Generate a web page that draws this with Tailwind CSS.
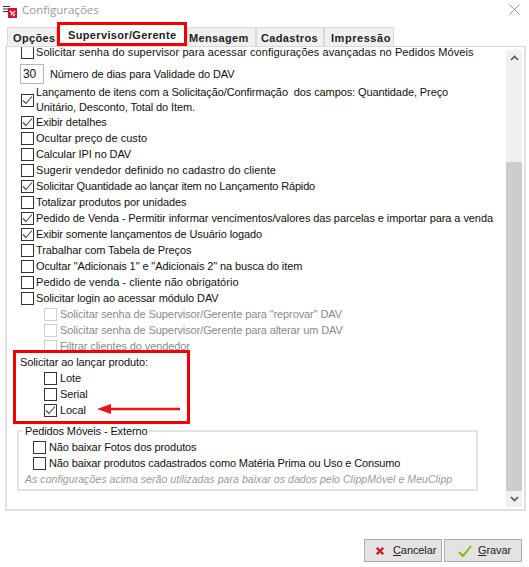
<!DOCTYPE html>
<html lang="pt-BR">
<head>
<meta charset="UTF-8">
<title>Configurações</title>
<script src="https://cdn.jsdelivr.net/npm/@tailwindcss/browser@4"></script>
</head>
<body class="bg-white w-[529px] h-[567px] overflow-hidden relative font-['Liberation_Sans',sans-serif] text-[11px] text-[#111]">

<!-- title bar -->
<div class="h-[27px] flex items-start relative">
  <svg class="absolute left-[2px] top-[5px]" width="16" height="13" viewBox="0 0 16 13"><path d="M1 1.500h7M1 4h6M1 6.500h5" stroke="#333" stroke-width="1" fill="none"/><rect x="6" y="3" width="9" height="10" fill="#d3142c"/><path d="M8 6l2 2M9 10l4-4M11 11l2-2" stroke="#fff" stroke-width="1.200" fill="none"/></svg>
  <span class="ml-[22px] mt-[1px] text-[11.5px] leading-[17px] text-[#999] font-['Open_Sans',sans-serif]">Configurações</span>
  <svg class="absolute left-[509px] top-[4px]" width="11" height="11" viewBox="0 0 11 11"><path d="M0.500 0.500l10 10M10.500 0.500l-10 10" stroke="#777" stroke-width="0.800" fill="none"/></svg>
</div>

<!-- tabs -->
<div class="h-[19px] flex ml-[7px] font-bold tracking-[0.35px] text-[#222]">
  <div class="w-[50px] bg-[#f0f0f0] border border-[#d9d9d9] border-b-0 pl-[5px] leading-[20px]">Opções</div>
  <div class="w-[130px] pl-[11px] leading-[16px]">Supervisor/Gerente</div>
  <div class="w-[69px] bg-[#f0f0f0] border border-[#d9d9d9] border-b-0 pl-[1px] leading-[20px]">Mensagem</div>
  <div class="w-[68px] bg-[#f0f0f0] border border-[#d9d9d9] border-b-0 pl-[4px] leading-[20px]">Cadastros</div>
  <div class="w-[70px] bg-[#f0f0f0] border border-[#d9d9d9] border-b-0 pl-[6px] tracking-[0.55px] leading-[20px]">Impressão</div>
</div>

<!-- panel -->
<div class="ml-[5px] w-[521px] h-[465px] border-2 border-t border-[#e0e0e0] border-t-[#d9d9d9] flex overflow-hidden">
  <div class="w-[499px] overflow-hidden pl-[14px]">
    <div class="tracking-[-0.1px] -mt-[1px]">
      <div class="flex h-[14px] items-start gap-[2px]"><span class="w-[13px] h-[13px] border border-[#333] shrink-0"></span><span class="leading-[12px] whitespace-nowrap tracking-[0.07px]">Solicitar senha do supervisor para acessar configurações avançadas no Pedidos Móveis</span></div>

      <div class="flex items-center h-[20px] mt-[4px] -ml-[1px]">
        <div class="w-[24px] h-[20px] border border-[#b5b5b5] pl-[2px] leading-[18px] text-[12px]">30</div>
        <span class="ml-[6px]">Número de dias para Validade do DAV</span>
      </div>

      <div class="flex gap-[2px] mt-[1px] h-[29px]">
        <span class="w-[13px] h-[13px] border border-[#333] mt-[9px] shrink-0 flex items-center justify-center"><svg width="11" height="11" viewBox="0 0 11 11"><path d="M1 5.500l3 3 6-7" stroke="#444" stroke-width="1.100" fill="none"/></svg></span>
        <span class="leading-[15px] w-[445px]">Lançamento de itens com a Solicitação/Confirmação&nbsp; dos campos: Quantidade, Preço Unitário, Desconto, Total do Item.</span>
      </div>

      <div class="flex items-center gap-[2px] h-[16px]"><span class="w-[13px] h-[13px] border border-[#333] shrink-0 flex items-center justify-center"><svg width="11" height="11" viewBox="0 0 11 11"><path d="M1 5.500l3 3 6-7" stroke="#444" stroke-width="1.100" fill="none"/></svg></span>Exibir detalhes</div>
      <div class="flex items-center gap-[2px] h-[16px] tracking-[0.02px]"><span class="w-[13px] h-[13px] border border-[#333] shrink-0"></span>Ocultar preço de custo</div>
      <div class="flex items-center gap-[2px] h-[16px]"><span class="w-[13px] h-[13px] border border-[#333] shrink-0"></span>Calcular IPI no DAV</div>
      <div class="flex items-center gap-[2px] h-[16px] tracking-[0.07px]"><span class="w-[13px] h-[13px] border border-[#333] shrink-0"></span>Sugerir vendedor definido no cadastro do cliente</div>
      <div class="flex items-center gap-[2px] h-[16px] tracking-[-0.16px]"><span class="w-[13px] h-[13px] border border-[#333] shrink-0 flex items-center justify-center"><svg width="11" height="11" viewBox="0 0 11 11"><path d="M1 5.500l3 3 6-7" stroke="#444" stroke-width="1.100" fill="none"/></svg></span>Solicitar Quantidade ao lançar item no Lançamento Rápido</div>
      <div class="flex items-center gap-[2px] h-[16px]"><span class="w-[13px] h-[13px] border border-[#333] shrink-0"></span>Totalizar produtos por unidades</div>
      <div class="flex items-center gap-[2px] h-[16px] whitespace-nowrap tracking-[-0.07px]"><span class="w-[13px] h-[13px] border border-[#333] shrink-0 flex items-center justify-center"><svg width="11" height="11" viewBox="0 0 11 11"><path d="M1 5.500l3 3 6-7" stroke="#444" stroke-width="1.100" fill="none"/></svg></span>Pedido de Venda - Permitir informar vencimentos/valores das parcelas e importar para a venda</div>
      <div class="flex items-center gap-[2px] h-[16px]"><span class="w-[13px] h-[13px] border border-[#333] shrink-0 flex items-center justify-center"><svg width="11" height="11" viewBox="0 0 11 11"><path d="M1 5.500l3 3 6-7" stroke="#444" stroke-width="1.100" fill="none"/></svg></span>Exibir somente lançamentos de Usuário logado</div>
      <div class="flex items-center gap-[2px] h-[16px]"><span class="w-[13px] h-[13px] border border-[#333] shrink-0"></span>Trabalhar com Tabela de Preços</div>
      <div class="flex items-center gap-[2px] h-[16px]"><span class="w-[13px] h-[13px] border border-[#333] shrink-0"></span>Ocultar "Adicionais 1" e "Adicionais 2" na busca do item</div>
      <div class="flex items-center gap-[2px] h-[16px] tracking-[0.05px]"><span class="w-[13px] h-[13px] border border-[#333] shrink-0"></span>Pedido de venda - cliente não obrigatório</div>
      <div class="flex items-center gap-[2px] h-[16px]"><span class="w-[13px] h-[13px] border border-[#333] shrink-0"></span>Solicitar login ao acessar módulo DAV</div>

      <div class="pl-[23px] text-[#8a8a8a]">
        <div class="flex items-center gap-[3px] h-[16px]"><span class="w-[13px] h-[13px] border border-[#d0d0d0] shrink-0"></span>Solicitar senha de Supervisor/Gerente para "reprovar" DAV</div>
        <div class="flex items-center gap-[3px] h-[16px]"><span class="w-[13px] h-[13px] border border-[#d0d0d0] shrink-0"></span>Solicitar senha de Supervisor/Gerente para alterar um DAV</div>
        <div class="flex items-center gap-[3px] h-[16px]"><span class="w-[13px] h-[13px] border border-[#d0d0d0] shrink-0"></span>Filtrar clientes do vendedor</div>
      </div>

      <div class="h-[16px] leading-[16px] -ml-[1px]">Solicitar ao lançar produto:</div>
      <div class="pl-[23px]">
        <div class="flex items-center gap-[3px] h-[16px]"><span class="w-[13px] h-[13px] border border-[#333] shrink-0"></span>Lote</div>
        <div class="flex items-center gap-[3px] h-[16px]"><span class="w-[13px] h-[13px] border border-[#333] shrink-0"></span>Serial</div>
        <div class="flex items-center gap-[3px] h-[16px]"><span class="w-[13px] h-[13px] border border-[#333] shrink-0 flex items-center justify-center"><svg width="11" height="11" viewBox="0 0 11 11"><path d="M1 5.500l3 3 6-7" stroke="#444" stroke-width="1.100" fill="none"/></svg></span>Local</div>
      </div>

      <!-- group box -->
      <div class="relative -ml-[4px] mt-[12px] w-[461px] h-[61px] border-2 border-[#e3e3e3] pl-[14px] pt-[7px]">
        <span class="absolute left-[4px] -top-[8px] bg-white px-[2px] leading-[14px] tracking-[-0.12px]">Pedidos Móveis - Externo</span>
        <div class="flex items-center gap-[3px] h-[16px]"><span class="w-[13px] h-[13px] border border-[#333] shrink-0"></span>Não baixar Fotos dos produtos</div>
        <div class="flex items-center gap-[3px] h-[16px] tracking-[-0.14px]"><span class="w-[13px] h-[13px] border border-[#333] shrink-0"></span>Não baixar produtos cadastrados como Matéria Prima ou Uso e Consumo</div>
        <p class="-ml-[8px] mt-[1px] text-[10.5px] italic text-[#999] whitespace-nowrap tracking-[0.06px]">As configurações acima serão utilizadas para baixar os dados pelo ClippMóvel e MeuClipp</p>
      </div>
    </div>
  </div>

  <!-- scrollbar -->
  <div class="w-[16px] h-[457px] mt-[3px] bg-[#f0f0f0] flex flex-col items-center justify-between">
    <svg class="mt-[5px]" width="9" height="6" viewBox="0 0 9 6"><path d="M1 5l3.500-3.500L8 5" stroke="#555" stroke-width="1.600" fill="none"/></svg>
    <div class="flex flex-col items-center w-full">
      <div class="w-full h-[329px] bg-[#cdcdcd]"></div>
      <svg class="my-[5px]" width="9" height="6" viewBox="0 0 9 6"><path d="M1 1l3.500 3.500L8 1" stroke="#555" stroke-width="1.600" fill="none"/></svg>
    </div>
  </div>
</div>

<!-- buttons -->
<div class="flex justify-end gap-[2px] mr-[7px] mt-[28px] text-[#222] tracking-[-0.1px]">
  <button class="w-[78px] h-[23px] bg-[#e3e3e3] border border-[#adadad] flex items-center pl-[11px]">
    <svg width="8" height="8" viewBox="0 0 8 8"><path d="M0.800 0.800l6.400 6.400M7.200 0.800l-6.400 6.400" stroke="#c8202c" stroke-width="2.300" fill="none"/></svg>
    <span class="ml-[9px]"><u>C</u>ancelar</span>
  </button>
  <button class="w-[78px] h-[23px] bg-[#e3e3e3] border border-[#adadad] flex items-center pl-[13px]">
    <svg width="14" height="12" viewBox="0 0 14 12"><path d="M1 7l4 4 8-10" stroke="#86b81c" stroke-width="2" fill="none"/></svg>
    <span class="ml-[6px]"><u>G</u>ravar</span>
  </button>
</div>

<!-- red annotations -->
<div class="absolute left-[57px] top-[22px] w-[130px] h-[24px] border-[3px] border-[#f00000]"></div>
<div class="absolute left-[13px] top-[350px] w-[177px] h-[74px] border-[3px] border-[#f00000]"></div>
<svg class="absolute left-[96px] top-[402px]" width="86" height="14" viewBox="0 0 86 14"><path d="M84 7H12" stroke="#e8141c" stroke-width="2.500"/><path d="M1 7l14-5v10z" fill="#e8141c"/></svg>
</body>
</html>
